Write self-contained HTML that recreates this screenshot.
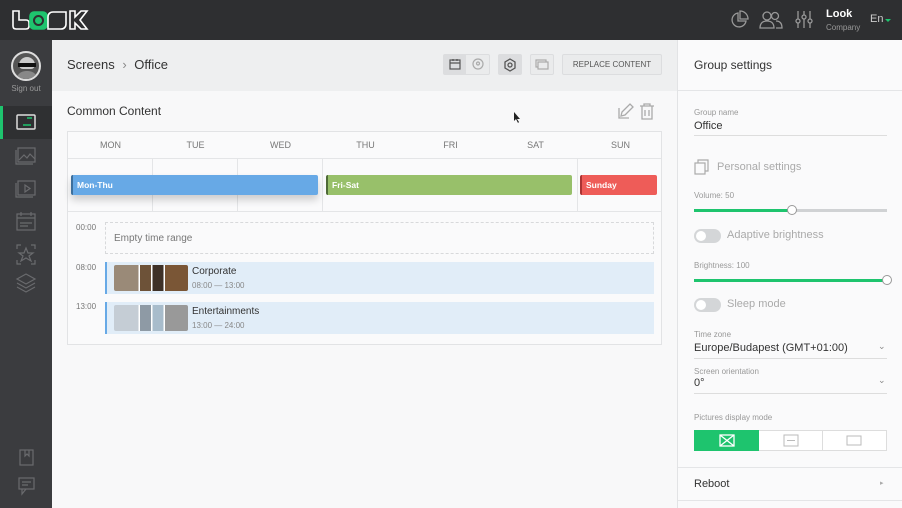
<!DOCTYPE html>
<html><head><meta charset="utf-8"><style>
*{box-sizing:border-box;margin:0;padding:0}
body{width:902px;height:508px;overflow:hidden;font-family:"Liberation Sans",sans-serif;background:#f8f8f9;position:relative;color:#333}
.abs{position:absolute}
.top{left:0;top:0;width:902px;height:40px;background:#2e2f31}
.side{left:0;top:40px;width:52px;height:468px;background:#3b3c3f}
.hdr{left:52px;top:40px;width:625px;height:51px;background:#eeeff0}
.panel{left:677px;top:40px;width:225px;height:468px;background:#fafafb;border-left:1px solid #e2e3e5}
.card{left:67px;top:131px;width:595px;height:214px;border:1px solid #e2e3e5;background:#fafafb}
.day{top:0;height:26px;width:85px;text-align:center;font-size:9px;color:#777;line-height:26px}
.btn{border:1px solid #dcdddf;border-radius:2px;background:#eaebec}
.lbl{font-size:8px;color:#999}
.val{font-size:11px;color:#333}
.tog{width:27px;height:14px;border-radius:7px;background:#d4d6d8}
.tog::after{content:"";position:absolute;left:2px;top:2px;width:10px;height:10px;border-radius:5px;background:#fff}
</style></head><body>
<div class="abs top">
<svg class="abs" style="left:10px;top:9px" width="80" height="22" viewBox="0 0 80 22" fill="none" stroke="#fff" stroke-width="1.6">
<path d="M3 2v15c0 2 1 3 3 3h10c2 0 3-1 3-3v-3c0-2-1-3-3-3H9V2z"/>
<rect x="20" y="3" width="17" height="17" rx="4" fill="#1ec46e" stroke="#1ec46e"/>
<circle cx="28.5" cy="11.5" r="4.5" stroke="#2e2f31" stroke-width="2"/>
<path d="M43 3h13v12c0 3-2 5-5 5H38V8c0-3 2-5 5-5z"/>
<path d="M60 2h5v6l6-6h6l-7 9 7 9h-6l-6-6v6h-5z"/>
</svg>
<svg class="abs" style="left:729px;top:10px" width="20" height="20" fill="none" stroke="#999" stroke-width="1.3"><path d="M9 3a7 7 0 1 0 8 8H9z"/><path d="M11 1v8h8a8 8 0 0 0-8-8z"/></svg>
<svg class="abs" style="left:759px;top:10px" width="24" height="20" fill="none" stroke="#999" stroke-width="1.3"><circle cx="8" cy="6" r="4"/><path d="M1 18c0-5 3-7 7-7s7 2 7 7z"/><circle cx="16" cy="6" r="3.5"/><path d="M17 11c4 0 6 2 6 7h-6"/></svg>
<svg class="abs" style="left:794px;top:9px" width="20" height="20" fill="none" stroke="#999" stroke-width="1.3"><path d="M4 2v8M4 14v5M10 2v4M10 10v9M16 2v8M16 14v5"/><circle cx="4" cy="12" r="2"/><circle cx="10" cy="8" r="2"/><circle cx="16" cy="12" r="2"/></svg>
<div class="abs" style="left:826px;top:8px;color:#fff;font-weight:bold;font-size:11px">Look</div>
<div class="abs" style="left:826px;top:23px;color:#999;font-size:8px">Company</div>
<div class="abs" style="left:870px;top:13px;color:#ccc;font-size:11px">En</div>
<div class="abs" style="left:885px;top:19px;border:3px solid transparent;border-top:3px solid #1ec46e"></div>
</div>
<div class="abs side">
<div class="abs" style="left:11px;top:11px;width:30px;height:30px;border-radius:15px;background:#555;border:2px solid #ddd;overflow:hidden">
<div class="abs" style="left:6px;top:4px;width:16px;height:12px;border-radius:8px 8px 4px 4px;background:#ccc"></div>
<div class="abs" style="left:5px;top:10px;width:18px;height:4px;background:#111"></div>
<div class="abs" style="left:3px;top:18px;width:22px;height:10px;border-radius:10px 10px 0 0;background:#888"></div>
</div>
<div class="abs" style="left:0;top:44px;width:52px;text-align:center;font-size:8px;color:#999">Sign out</div>
<div class="abs" style="left:0;top:66px;width:52px;height:33px;background:#2f3032"></div>
<div class="abs" style="left:0;top:66px;width:3px;height:33px;background:#1ec46e"></div>
<svg class="abs" style="left:15px;top:73px" width="22" height="20" fill="none" stroke="#ddd" stroke-width="1.5"><rect x="2" y="2" width="18" height="14" rx="1"/><path d="M8 12h8M12 5h5" stroke="#1ec46e"/></svg>
<svg class="abs" style="left:14px;top:104px" width="24" height="190" fill="none" stroke="#6a6b6e" stroke-width="1.2">
<rect x="4" y="4" width="17" height="14"/><path d="M2 6v14h17M5 16l5-5 3 3 3-4 5 5"/>
<rect x="4" y="37" width="17" height="14"/><path d="M2 39v14h17M11 41v7l5-3.5z"/>
<rect x="3" y="70" width="18" height="16"/><path d="M3 74h18M7 68v4M17 68v4M6 79h12M6 82h8"/>
<path d="M3 105v-4h4M17 101h4v4M3 116v4h4M21 116v4h-4M12 104l2 5h5l-4 3 2 5-5-3-5 3 2-5-4-3h5z"/>
<path d="M12 130l9 5-9 5-9-5zM3 139l9 5 9-5M3 143l9 5 9-5"/>
</svg>
<svg class="abs" style="left:17px;top:408px" width="20" height="50" fill="none" stroke="#6a6b6e" stroke-width="1.2"><rect x="3" y="2" width="13" height="15"/><path d="M8 2v6l2-2 2 2V2"/><rect x="2" y="30" width="15" height="11"/><path d="M5 41v5l4-5M5 34h9M5 37h6"/></svg>
</div>
<div class="abs hdr">
<div class="abs" style="left:15px;top:17px;font-size:13px;color:#333">Screens <span style="color:#888;margin:0 4px">›</span> Office</div>
<div class="abs btn" style="left:391px;top:14px;width:47px;height:21px"></div>
<div class="abs" style="left:392px;top:15px;width:22px;height:19px;background:#dcdddf"></div>
<svg class="abs" style="left:396px;top:18px" width="14" height="13" fill="none" stroke="#555" stroke-width="1.2"><rect x="2" y="2" width="10" height="9"/><path d="M2 5h10M5 1v2M9 1v2"/></svg>
<svg class="abs" style="left:419px;top:18px" width="14" height="13" fill="none" stroke="#aaa" stroke-width="1.2"><circle cx="7" cy="6" r="5"/><circle cx="7" cy="5.5" r="1.5"/></svg>
<div class="abs btn" style="left:446px;top:14px;width:24px;height:21px;background:#dcdddf"></div>
<svg class="abs" style="left:451px;top:18px" width="14" height="14" fill="none" stroke="#555" stroke-width="1.3"><path d="M7 1l5 3v6l-5 3-5-3V4z"/><circle cx="7" cy="7" r="2"/></svg>
<div class="abs btn" style="left:478px;top:14px;width:24px;height:21px"></div>
<svg class="abs" style="left:483px;top:18px" width="14" height="13" fill="none" stroke="#aaa" stroke-width="1.2"><rect x="1" y="2" width="10" height="7"/><rect x="3" y="4" width="10" height="7" fill="#eaebec"/></svg>
<div class="abs btn" style="left:510px;top:14px;width:100px;height:21px;font-size:8px;color:#555;text-align:center;line-height:20px">REPLACE CONTENT</div>
</div>
<div class="abs" style="left:67px;top:104px;font-size:12px;color:#333">Common Content</div>
<svg class="abs" style="left:617px;top:102px" width="40" height="18" fill="none" stroke="#aaa" stroke-width="1.3"><path d="M2 6v10h10M4 14l1-4 8-8 3 3-8 8z"/><path d="M23 4h14M27 4V2h6v2M25 4v13h10V4M28 8v6M32 8v6"/></svg>
<svg class="abs" style="left:513px;top:111px" width="8" height="12"><path d="M1 1v9l2-2 2 4 1-1-2-3h3z" fill="#222"/></svg>
<div class="abs card">
<div class="abs" style="left:0;top:26px;width:593px;height:1px;background:#e4e5e7"></div>
<div class="abs" style="left:0;top:79px;width:593px;height:1px;background:#e4e5e7"></div>
<div class="abs day" style="left:0">MON</div><div class="abs day" style="left:85px">TUE</div><div class="abs day" style="left:170px">WED</div><div class="abs day" style="left:255px">THU</div><div class="abs day" style="left:340px">FRI</div><div class="abs day" style="left:425px">SAT</div><div class="abs day" style="left:510px">SUN</div>
<div class="abs" style="left:84px;top:26px;width:1px;height:53px;background:#e4e5e7"></div>
<div class="abs" style="left:169px;top:26px;width:1px;height:53px;background:#e4e5e7"></div>
<div class="abs" style="left:254px;top:26px;width:1px;height:53px;background:#e4e5e7"></div>
<div class="abs" style="left:509px;top:26px;width:1px;height:53px;background:#e4e5e7"></div>
<div class="abs" style="left:3px;top:43px;width:247px;height:20px;background:#67a9e6;border-left:2px solid #3d6f9c;border-radius:2px;box-shadow:0 5px 8px rgba(0,0,0,.18);color:#fff;font-size:8.5px;font-weight:bold;padding:5px 4px">Mon-Thu</div>
<div class="abs" style="left:258px;top:43px;width:246px;height:20px;background:#98c06a;border-left:2px solid #4f6a37;border-radius:2px;color:#fff;font-size:8.5px;font-weight:bold;padding:5px 4px">Fri-Sat</div>
<div class="abs" style="left:512px;top:43px;width:77px;height:20px;background:#ee5c58;border-left:2px solid #a33;border-radius:2px;color:#fff;font-size:8.5px;font-weight:bold;padding:5px 4px">Sunday</div>
<div class="abs" style="left:8px;top:91px;font-size:8px;color:#777">00:00</div>
<div class="abs" style="left:37px;top:90px;width:549px;height:32px;border:1px dashed #d8d9db;font-size:10px;color:#777;padding:10px 8px">Empty time range</div>
<div class="abs" style="left:8px;top:131px;font-size:8px;color:#777">08:00</div>
<div class="abs" style="left:37px;top:130px;width:549px;height:32px;background:#e1edf8;border-left:2px solid #67a9e6"></div>
<div class="abs" style="left:46px;top:133px;width:74px;height:26px;background:linear-gradient(90deg,#9a8a78 0 33%,#fff 33% 35%,#6d5238 35% 50%,#fff 50% 52%,#3e3128 52% 67%,#fff 67% 69%,#7a5636 69%);border-radius:2px"></div>
<div class="abs" style="left:124px;top:134px;font-size:10px;color:#333">Corporate</div>
<div class="abs" style="left:124px;top:149px;font-size:8px;color:#888">08:00 — 13:00</div>
<div class="abs" style="left:8px;top:170px;font-size:8px;color:#777">13:00</div>
<div class="abs" style="left:37px;top:170px;width:549px;height:32px;background:#e1edf8;border-left:2px solid #67a9e6"></div>
<div class="abs" style="left:46px;top:173px;width:74px;height:26px;background:linear-gradient(90deg,#c5cdd5 0 33%,#fff 33% 35%,#8e9aa5 35% 50%,#fff 50% 52%,#a8bccb 52% 67%,#fff 67% 69%,#999 69%);border-radius:2px"></div>
<div class="abs" style="left:124px;top:174px;font-size:10px;color:#333">Entertainments</div>
<div class="abs" style="left:124px;top:189px;font-size:8px;color:#888">13:00 — 24:00</div>
</div>
<div class="abs panel">
<div class="abs" style="left:16px;top:18px;font-size:12px;color:#333">Group settings</div>
<div class="abs" style="left:0;top:50px;width:225px;height:1px;background:#e4e5e7"></div>
<div class="abs lbl" style="left:16px;top:68px">Group name</div>
<div class="abs val" style="left:16px;top:80px">Office</div>
<div class="abs" style="left:16px;top:95px;width:193px;height:1px;background:#ddd"></div>
<svg class="abs" style="left:16px;top:119px" width="16" height="16" fill="none" stroke="#aaa" stroke-width="1.2"><rect x="1" y="4" width="10" height="11"/><path d="M4 4V1h10v11h-3"/></svg>
<div class="abs" style="left:39px;top:121px;font-size:11px;color:#aaa">Personal settings</div>
<div class="abs lbl" style="left:16px;top:151px">Volume: 50</div>
<div class="abs" style="left:16px;top:169px;width:193px;height:3px;background:#d0d2d4"></div>
<div class="abs" style="left:16px;top:169px;width:98px;height:3px;background:#1ec46e"></div>
<div class="abs" style="left:109px;top:165px;width:10px;height:10px;border-radius:5px;background:#fff;border:1px solid #999"></div>
<div class="abs tog" style="left:16px;top:189px"></div>
<div class="abs" style="left:49px;top:189px;font-size:11px;color:#aaa">Adaptive brightness</div>
<div class="abs lbl" style="left:16px;top:221px">Brightness: 100</div>
<div class="abs" style="left:16px;top:239px;width:193px;height:3px;background:#1ec46e"></div>
<div class="abs" style="left:204px;top:235px;width:10px;height:10px;border-radius:5px;background:#fff;border:1px solid #999"></div>
<div class="abs tog" style="left:16px;top:258px"></div>
<div class="abs" style="left:49px;top:258px;font-size:11px;color:#aaa">Sleep mode</div>
<div class="abs lbl" style="left:16px;top:290px">Time zone</div>
<div class="abs val" style="left:16px;top:302px">Europe/Budapest (GMT+01:00)</div>
<div class="abs" style="left:200px;top:301px;font-size:9px;color:#888">⌄</div>
<div class="abs" style="left:16px;top:318px;width:193px;height:1px;background:#ddd"></div>
<div class="abs lbl" style="left:16px;top:327px">Screen orientation</div>
<div class="abs val" style="left:16px;top:337px">0°</div>
<div class="abs" style="left:200px;top:335px;font-size:9px;color:#888">⌄</div>
<div class="abs" style="left:16px;top:353px;width:193px;height:1px;background:#ddd"></div>
<div class="abs lbl" style="left:16px;top:373px">Pictures display mode</div>
<div class="abs" style="left:16px;top:390px;width:193px;height:21px;border:1px solid #ddd;background:#fff"></div>
<div class="abs" style="left:16px;top:390px;width:65px;height:21px;background:#1ec46e"></div>
<div class="abs" style="left:144px;top:391px;width:1px;height:19px;background:#ddd"></div>
<svg class="abs" style="left:40px;top:393px" width="18" height="15" fill="none" stroke="#fff" stroke-width="1.3"><rect x="2" y="2" width="14" height="11"/><path d="M2 2l14 11M16 2L2 13"/></svg>
<svg class="abs" style="left:104px;top:393px" width="18" height="15" fill="none" stroke="#bbb" stroke-width="1"><rect x="2" y="2" width="14" height="11"/><path d="M5 7.5h8"/></svg>
<svg class="abs" style="left:167px;top:393px" width="18" height="15" fill="none" stroke="#bbb" stroke-width="1"><rect x="2" y="3" width="14" height="9"/></svg>
<div class="abs" style="left:0;top:427px;width:225px;height:1px;background:#e4e5e7"></div>
<div class="abs" style="left:16px;top:438px;font-size:11px;color:#333">Reboot</div>
<div class="abs" style="left:202px;top:439px;font-size:7px;color:#aaa">▸</div>
<div class="abs" style="left:0;top:460px;width:225px;height:1px;background:#e4e5e7"></div>
</div>
</body></html>
